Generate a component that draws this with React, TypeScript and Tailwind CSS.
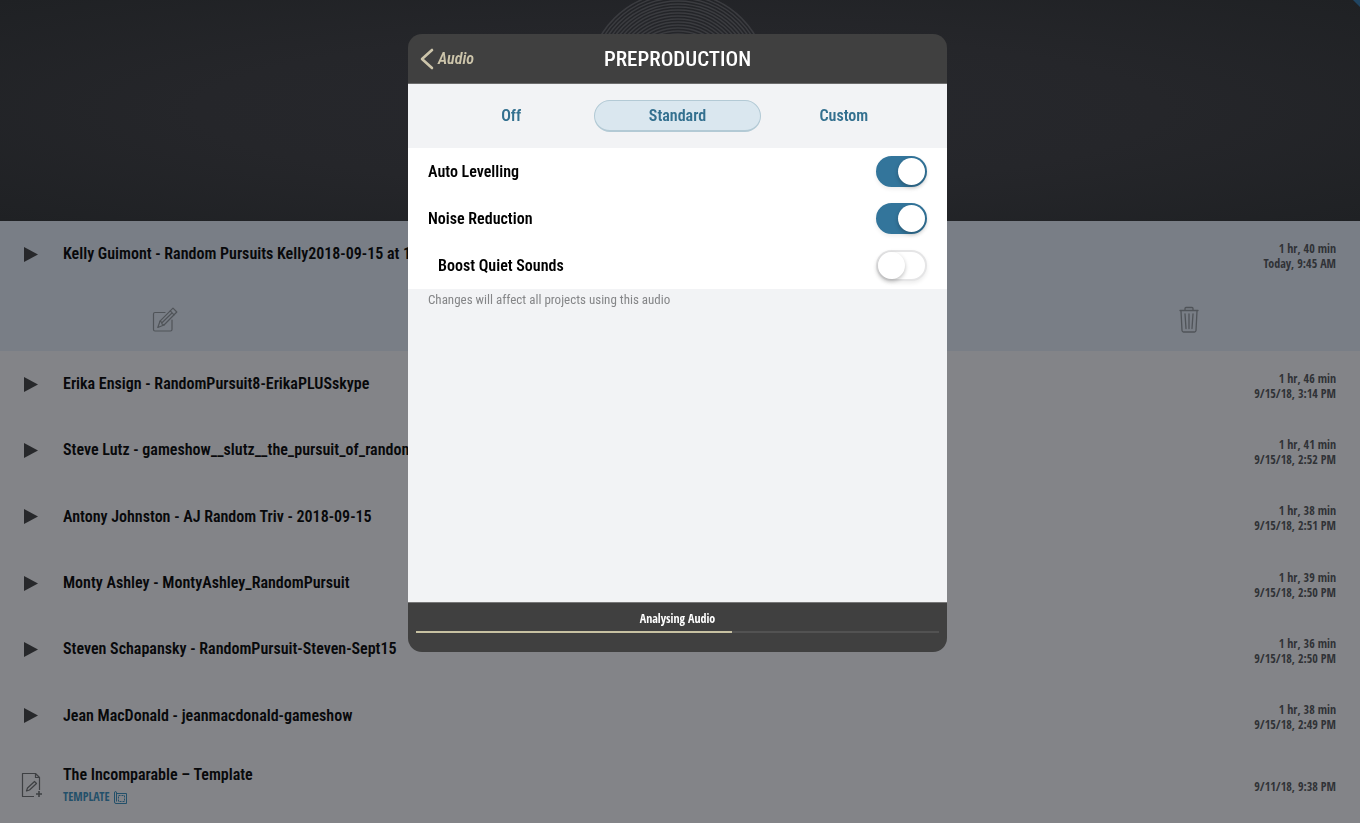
import { useState } from "react";

const projects = [
  { title: "Erika Ensign - RandomPursuit8-ErikaPLUSskype", length: "1 hr, 46 min", date: "9/15/18, 3:14 PM" },
  { title: "Steve Lutz - gameshow__slutz__the_pursuit_of_random", length: "1 hr, 41 min", date: "9/15/18, 2:52 PM" },
  { title: "Antony Johnston - AJ Random Triv - 2018-09-15", length: "1 hr, 38 min", date: "9/15/18, 2:51 PM" },
  { title: "Monty Ashley - MontyAshley_RandomPursuit", length: "1 hr, 39 min", date: "9/15/18, 2:50 PM" },
  { title: "Steven Schapansky - RandomPursuit-Steven-Sept15", length: "1 hr, 36 min", date: "9/15/18, 2:50 PM" },
  { title: "Jean MacDonald - jeanmacdonald-gameshow", length: "1 hr, 38 min", date: "9/15/18, 2:49 PM" },
];

const modes = ["Off", "Standard", "Custom"];
const rings = Array.from({ length: 22 }, (_, i) => 90 - i * 3);

function PlayButton({ title }: { title: string }) {
  return (
    <button aria-label={`Play ${title}`} className="shrink-0 w-[63px] pl-6">
      <svg width="14" height="15" viewBox="0 0 14 15" fill="#27282b">
        <path d="M0 0L14 7.5L0 15Z" />
      </svg>
    </button>
  );
}

function Details({ length, date }: { length?: string; date: string }) {
  return (
    <div className="shrink-0 pl-4 pt-[3px] text-right font-['Open_Sans_Condensed','Roboto_Condensed',sans-serif] text-[12px] leading-[15px] font-bold text-[#303236]">
      {length && <p>{length}</p>}
      <p>{date}</p>
    </div>
  );
}

function ProjectRow({ title, length, date }: { title: string; length: string; date: string }) {
  return (
    <div className="flex items-center min-h-[66px] pr-6">
      <PlayButton title={title} />
      <h3 className="flex-1 truncate text-[16px] leading-6 font-semibold">{title}</h3>
      <Details length={length} date={date} />
    </div>
  );
}

function Toggle({ label, defaultOn = false, indent = false }: { label: string; defaultOn?: boolean; indent?: boolean }) {
  const [on, setOn] = useState(defaultOn);

  return (
    <label className={`flex items-center justify-between h-[47px] pr-5 cursor-pointer ${indent ? "pl-[30px]" : "pl-5"}`}>
      <span className="text-[16px] leading-6 font-semibold text-black">{label}</span>
      <input type="checkbox" role="switch" checked={on} onChange={(e) => setOn(e.target.checked)} className="peer sr-only" />
      <span className="flex items-center w-[51px] h-[31px] rounded-full border-2 border-[#e5e5e6] bg-white shadow-[0_2px_4px_rgba(0,0,0,0.08)] transition-colors peer-checked:justify-end peer-checked:border-[#33759b] peer-checked:bg-[#33759b]">
        <span className="w-[27px] h-[27px] rounded-full bg-white shadow-[0_2px_4px_rgba(0,0,0,0.25)]" />
      </span>
    </label>
  );
}

function PreproductionDialog() {
  const [mode, setMode] = useState("Standard");
  const progress = 60.5;

  return (
    <div className="fixed inset-0 z-10 flex items-start justify-center pt-[34px] pr-[5px]">
      <div role="dialog" aria-label="Preproduction" className="flex flex-col w-full max-w-[539px] rounded-[14px] overflow-hidden bg-[#404040]">
        <header className="grid grid-cols-3 items-center h-[50px] border-b border-[#6c6c6c]">
          <button className="flex items-center gap-1 pl-3 text-[#cdc5ab]">
            <svg width="14" height="22" viewBox="0 0 14 22" fill="none" stroke="currentColor" strokeWidth="2.6" strokeLinecap="round" strokeLinejoin="round">
              <path d="M12 2L2 11L12 20" />
            </svg>
            <span className="text-[16px] leading-6 font-semibold italic">Audio</span>
          </button>
          <h1 className="text-center text-[21px] leading-6 font-medium text-white">PREPRODUCTION</h1>
        </header>

        <div role="group" aria-label="Mode" className="grid grid-cols-3 px-5 py-4 bg-[#f2f3f5]">
          {modes.map((m) => (
            <button
              key={m}
              onClick={() => setMode(m)}
              aria-pressed={mode === m}
              className={`h-8 rounded-full text-[16px] leading-6 font-semibold text-[#33708f] ${
                mode === m ? "bg-[#dae7ef] border border-b-2 border-[#b3cad5]" : ""
              }`}
            >
              {m}
            </button>
          ))}
        </div>

        <div className="bg-white">
          <Toggle label="Auto Levelling" defaultOn />
          <Toggle label="Noise Reduction" defaultOn />
          <Toggle label="Boost Quiet Sounds" indent />
        </div>
        <p className="min-h-[313px] px-5 pt-[3px] bg-[#f2f3f5] text-[13px] leading-4 text-[#858688]">Changes will affect all projects using this audio</p>

        <footer className="h-[50px] px-2 pt-2 border-t border-[#777]">
          <p className="text-center font-['Open_Sans_Condensed','Roboto_Condensed',sans-serif] text-[12px] leading-4 font-bold text-white">Analysing Audio</p>
          <div role="progressbar" aria-label="Analysing Audio" aria-valuenow={progress} className="mt-1 h-[2px] bg-[#525252]">
            <div className="h-full bg-[#c7c1a2]" style={{ width: `${progress}%` }} />
          </div>
        </footer>
      </div>
    </div>
  );
}

export default function App() {
  return (
    <div className="flex flex-col min-h-screen bg-[#838488] text-[#08090b] font-['Roboto_Condensed','Open_Sans_Condensed',sans-serif]">
      <header className="relative flex justify-center h-[221px] overflow-hidden pr-[5px] bg-[radial-gradient(ellipse_at_center,#27282d_0%,#25262a_50%,#1f2124_100%)]">
        <svg width="200" height="200" viewBox="0 0 200 200" fill="none" stroke="#3b3c40" strokeWidth="1.5">
          {rings.map((r) => (
            <circle key={r} cx="100" cy="82" r={r} />
          ))}
        </svg>
        <svg className="absolute top-0 right-0" width="7" height="7" viewBox="0 0 7 7" fill="#204562">
          <path d="M0 0H7V7Z" />
        </svg>
      </header>

      <main className="flex flex-1 flex-col">
        <section className="h-[130px] bg-[#797e86]">
          <ProjectRow title="Kelly Guimont - Random Pursuits Kelly2018-09-15 at 1" length="1 hr, 40 min" date="Today, 9:45 AM" />
          <div className="flex items-center justify-between h-[66px] pl-[152px] pr-[160px] text-[#505459]">
            <button aria-label="Edit">
              <svg width="26" height="26" viewBox="0 0 26 26" fill="none" stroke="currentColor" strokeWidth="1.2" strokeLinejoin="round" strokeLinecap="round">
                <path d="M13 5.5H3Q1.500 5.500 1.500 7V22.500Q1.500 24 3 24H18.500Q20 24 20 22.500V13" />
                <path d="M21 1.200L24.800 5L12 18L5.800 20.500L8 14.200Z" />
                <path d="M8 14.200L9.500 15L10 17L12 18M18.300 3.900L22 7.800M20 6L10 15.700" />
              </svg>
            </button>
            <button aria-label="Delete">
              <svg width="22" height="28" viewBox="0 0 22 28" fill="none" stroke="currentColor" strokeWidth="1.3" strokeLinejoin="round" strokeLinecap="round">
                <path d="M2 4.500H20M7 4.500V2.500Q7 1.500 8 1.500H14Q15 1.500 15 2.500V4.500" />
                <path d="M3 5L4 24.500Q4.200 26 5.500 26H16.500Q17.800 26 18 24.500L19 5M7 8L8 22.500M11 8V22.500M15 8L14 22.500" />
              </svg>
            </button>
          </div>
        </section>

        <section className="grid flex-1 auto-rows-fr">
          {projects.map((p) => (
            <ProjectRow key={p.title} {...p} />
          ))}
        </section>

        <section className="flex items-center h-[74px] pb-[2px] pr-6">
          <div className="shrink-0 w-[63px] pl-[21px]">
            <svg width="22" height="26" viewBox="0 0 22 26" fill="none" stroke="#3e4043" strokeWidth="1.2" strokeLinejoin="round">
              <path d="M13 24.500H1.500V1.500H14.500L18.500 5.500V18M14.500 1.500V5.500H18.500" />
              <path d="M13.500 9.500L15.500 11.500L8.500 18L5.500 19L6.500 16Z" />
              <path d="M15 22H21M18 19V25" strokeWidth="1.6" />
            </svg>
          </div>
          <div className="flex-1">
            <h3 className="text-[16px] leading-6 font-semibold">The Incomparable – Template</h3>
            <div className="flex items-center gap-1 text-[#23506a]">
              <span className="font-['Open_Sans_Condensed','Roboto_Condensed',sans-serif] text-[12px] leading-5 font-bold">TEMPLATE</span>
              <svg width="13" height="13" viewBox="0 0 13 13" fill="none" stroke="currentColor">
                <path d="M2.500 2.500H12.500V12.500H2Q.500 12.500 .500 11V2Q.500 .500 1.500 .500T2.500 2V10.500" />
                <path d="M4.500 4.500H10.500V10.500H4.500Z" strokeDasharray="2 1" />
              </svg>
            </div>
          </div>
          <Details date="9/11/18, 9:38 PM" />
        </section>
      </main>

      <PreproductionDialog />
    </div>
  );
}
